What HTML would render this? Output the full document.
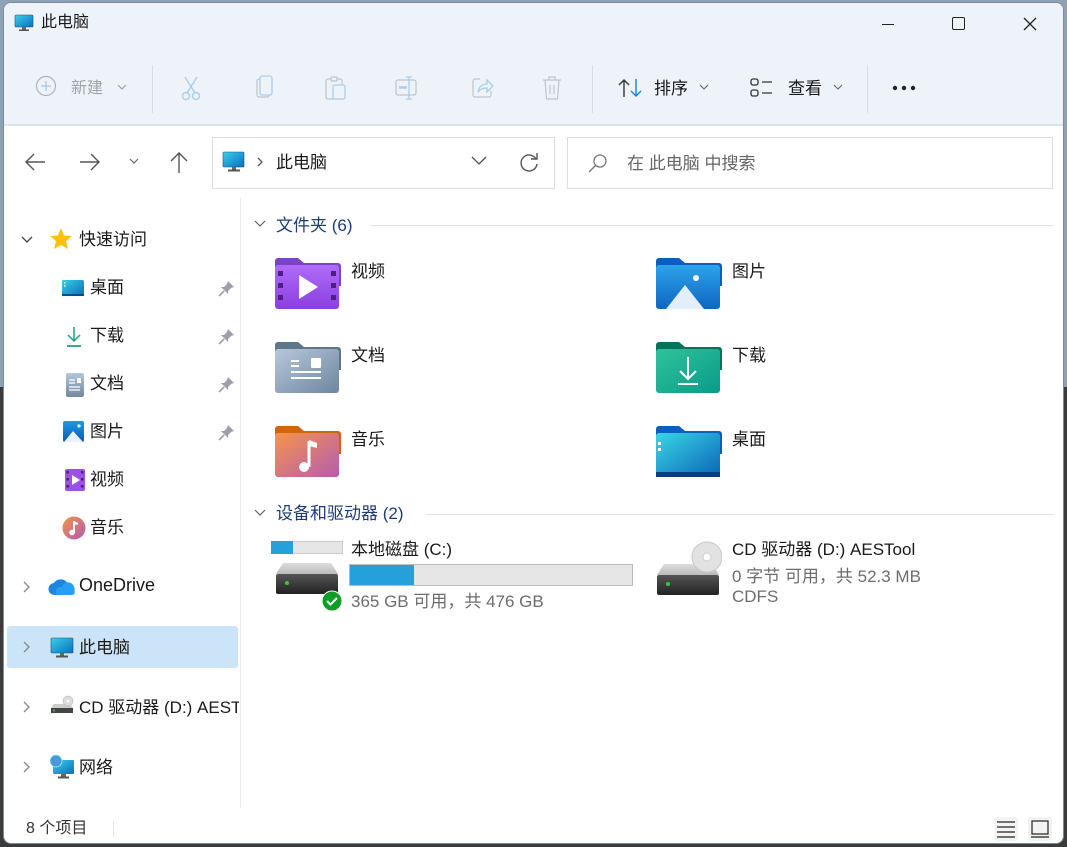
<!DOCTYPE html>
<html><head><meta charset="utf-8"><style>
*{margin:0;padding:0;box-sizing:border-box}
body{width:1067px;height:847px;overflow:hidden;position:relative;background:#3b3b3b;font-family:"Liberation Sans","Noto Sans CJK SC",sans-serif;color:#1a1a1a}
.topbg{position:absolute;left:0;top:0;width:1067px;height:387px;background:#8ea2b6}
.win{position:absolute;left:3px;top:2px;width:1061px;height:842px;background:#fff;border-radius:8px;overflow:hidden;border:1px solid #7d8b99}
.abs{position:absolute}
.title{left:0;top:0;width:100%;height:122px;background:#eef3fa}
.t{position:absolute;white-space:nowrap;margin-top:-4px}
.sep{position:absolute;width:1px;background:#d8dde3}
.g{color:#a0a4a8}
</style></head><body>
<div class="topbg"></div>
<div class="win">
 <div class="abs title"></div>
 <svg class="abs" style="left:10px;top:10px" width="20" height="20" viewBox="0 0 20 20"><defs><linearGradient id="m" x1="0" y1="0" x2="1" y2="1"><stop offset="0" stop-color="#3ad0e8"/><stop offset="1" stop-color="#0a6fc0"/></linearGradient></defs><rect x="1" y="2" width="18" height="12" rx="1" fill="url(#m)" stroke="#1b4f78" stroke-width="0.6"/><rect x="8" y="14" width="4" height="3" fill="#666"/><rect x="5" y="16.5" width="10" height="1.5" fill="#555"/></svg>
 <div class="t" style="left:37px;top:9px;font-size:16px">此电脑</div>
 <div class="abs" style="left:878px;top:21px;width:12px;height:1px;background:#222"></div>
 <div class="abs" style="left:948px;top:14px;width:13px;height:13px;border:1.3px solid #222;border-radius:2px"></div>
 <svg class="abs" style="left:1018px;top:13px" width="16" height="16"><path d="M2 2L14 14M14 2L2 14" stroke="#222" stroke-width="1.3"/></svg>
 <!-- toolbar -->
 <svg class="abs" style="left:31px;top:72px" width="22" height="22"><circle cx="11" cy="11" r="9.5" fill="none" stroke="#b0b4b8" stroke-width="1.2"/><path d="M11 6V16M6 11H16" stroke="#a9c7e6" stroke-width="1.3"/></svg>
 <div class="t g" style="left:67px;top:75px;font-size:16px">新建</div>
 <svg class="abs" style="left:113px;top:81px" width="10" height="7"><path d="M1 1L5 5L9 1" stroke="#999" stroke-width="1.1" fill="none"/></svg>
 <div class="sep" style="left:148px;top:62px;height:48px"></div>
 <svg class="abs" style="left:176px;top:72px" width="24" height="26"><path d="M5 2L15 18M17 2L7 18" stroke="#a8cdee" stroke-width="1.4" fill="none"/><circle cx="6" cy="21" r="3.5" fill="none" stroke="#a8cdee" stroke-width="1.4"/><circle cx="16" cy="21" r="3.5" fill="none" stroke="#a8cdee" stroke-width="1.4"/></svg>
 <svg class="abs" style="left:250px;top:72px" width="22" height="26"><rect x="3" y="4" width="12" height="18" rx="2" fill="none" stroke="#c0c4c8" stroke-width="1.2"/><rect x="6" y="1" width="12" height="19" rx="2" fill="#eef3fa" stroke="#a8cdee" stroke-width="1.3"/></svg>
 <svg class="abs" style="left:320px;top:72px" width="26" height="26"><rect x="2" y="4" width="16" height="20" rx="2" fill="none" stroke="#c0c4c8" stroke-width="1.2"/><rect x="7" y="2" width="6" height="4" rx="1" fill="#eef3fa" stroke="#c0c4c8" stroke-width="1.2"/><rect x="9" y="10" width="12" height="14" rx="2" fill="#eef3fa" stroke="#a8cdee" stroke-width="1.3"/></svg>
 <svg class="abs" style="left:390px;top:72px" width="26" height="26"><rect x="2" y="5" width="20" height="15" rx="2" fill="none" stroke="#c0c4c8" stroke-width="1.2"/><path d="M5 12.5H13" stroke="#a8cdee" stroke-width="2.5"/><path d="M15 2V24M12 2H18M12 24H18" stroke="#a8cdee" stroke-width="1.3" fill="none"/></svg>
 <svg class="abs" style="left:466px;top:72px" width="26" height="26"><path d="M10 4H5a2 2 0 0 0-2 2v14a2 2 0 0 0 2 2h14a2 2 0 0 0 2-2v-4" stroke="#c0c4c8" stroke-width="1.2" fill="none"/><path d="M8 17C9 11 13 9 17 9V5L23 11L17 17V13C13 13 10 14 8 17Z" stroke="#a8cdee" stroke-width="1.3" fill="none"/></svg>
 <svg class="abs" style="left:536px;top:72px" width="24" height="26"><path d="M3 5H21M9 5V2H15V5M5 5L6.5 24H17.5L19 5M10 10V19M14 10V19" stroke="#c0c4c8" stroke-width="1.2" fill="none"/></svg>
 <div class="sep" style="left:588px;top:62px;height:48px"></div>
 <svg class="abs" style="left:614px;top:74px" width="26" height="22"><path d="M6 20V3M1 8L6 3L11 8" stroke="#333" stroke-width="1.4" fill="none"/><path d="M18 2V19M13 14L18 19L23 14" stroke="#1a7fd8" stroke-width="1.4" fill="none"/></svg>
 <div class="t" style="left:650px;top:75px;font-size:17px">排序</div>
 <svg class="abs" style="left:695px;top:81px" width="10" height="7"><path d="M1 1L5 5L9 1" stroke="#666" stroke-width="1.1" fill="none"/></svg>
 <svg class="abs" style="left:746px;top:75px" width="26" height="20"><rect x="1" y="1" width="7" height="6" rx="2" fill="none" stroke="#333" stroke-width="1.3"/><rect x="1" y="12" width="7" height="6" rx="2" fill="none" stroke="#333" stroke-width="1.3"/><path d="M12 4H22M12 15H22" stroke="#333" stroke-width="1.3"/></svg>
 <div class="t" style="left:784px;top:75px;font-size:17px">查看</div>
 <svg class="abs" style="left:829px;top:81px" width="10" height="7"><path d="M1 1L5 5L9 1" stroke="#666" stroke-width="1.1" fill="none"/></svg>
 <div class="sep" style="left:863px;top:62px;height:48px"></div>
 <svg class="abs" style="left:887px;top:81px" width="30" height="8"><circle cx="4" cy="4" r="2.2" fill="#222"/><circle cx="13" cy="4" r="2.2" fill="#222"/><circle cx="22" cy="4" r="2.2" fill="#222"/></svg>
 <div class="abs" style="left:0;top:121px;width:100%;height:2px;background:#dfe3e8"></div>
 <!-- nav -->
 <svg class="abs" style="left:20px;top:148px" width="24" height="22"><path d="M2 11H21M10 3L2 11L10 19" stroke="#555" stroke-width="1.4" fill="none"/></svg>
 <svg class="abs" style="left:74px;top:148px" width="24" height="22"><path d="M2 11H21M13 3L21 11L13 19" stroke="#555" stroke-width="1.4" fill="none"/></svg>
 <svg class="abs" style="left:124px;top:154px" width="12" height="8"><path d="M2 2L6 6L10 2" stroke="#666" stroke-width="1.2" fill="none"/></svg>
 <svg class="abs" style="left:164px;top:147px" width="22" height="24"><path d="M11 23V3M3 11L11 3L19 11" stroke="#555" stroke-width="1.4" fill="none"/></svg>
 <div class="abs" style="left:208px;top:134px;width:343px;height:52px;border:1px solid #dcdcdc;background:#fff"></div>
 <svg class="abs" style="left:218px;top:148px" width="24" height="22"><rect x="1" y="1" width="21" height="15" rx="1" fill="url(#m)" stroke="#1b4f78" stroke-width="0.6"/><rect x="10" y="16" width="4" height="3" fill="#666"/><rect x="6" y="18.5" width="12" height="2" fill="#555"/></svg>
 <svg class="abs" style="left:253px;top:154px" width="7" height="10"><path d="M1 1L5 5L1 9" stroke="#555" stroke-width="1.3" fill="none"/></svg>
 <div class="t" style="left:272px;top:149px;font-size:17px">此电脑</div>
 <svg class="abs" style="left:466px;top:152px" width="18" height="12"><path d="M2 2L9 9L16 2" stroke="#555" stroke-width="1.3" fill="none"/></svg>
 <svg class="abs" style="left:514px;top:148px" width="22" height="22"><path d="M18 8A8 8 0 1 0 19 13" stroke="#555" stroke-width="1.4" fill="none"/><path d="M19 2V8H13" stroke="#555" stroke-width="1.4" fill="none"/></svg>
 <div class="abs" style="left:563px;top:134px;width:486px;height:52px;border:1px solid #dcdcdc;background:#fff"></div>
 <svg class="abs" style="left:583px;top:150px" width="22" height="22"><circle cx="13" cy="8" r="6" fill="none" stroke="#777" stroke-width="1.3"/><path d="M9 12L2 19" stroke="#777" stroke-width="1.4"/></svg>
 <div class="t" style="left:623px;top:150px;font-size:17px;color:#666">在 此电脑 中搜索</div>
 <!-- sidebar -->
 <div class="abs" style="left:236px;top:195px;width:1px;height:610px;background:#eaeaea"></div>
 <svg class="abs" style="left:16px;top:232px" width="14" height="10"><path d="M2 2L7 7L12 2" stroke="#444" stroke-width="1.3" fill="none"/></svg>
 <svg class="abs" style="left:45px;top:224px" width="24" height="24"><path d="M12 1L15 8.5L23 9L17 14L19 22L12 18L5 22L7 14L1 9L9 8.5Z" fill="#ffc107"/></svg>
 <div class="t" style="left:75px;top:226px;font-size:17px">快速访问</div>

 <svg class="abs" style="left:57px;top:275px" width="24" height="20"><defs><linearGradient id="d" x1="0" y1="0" x2="1" y2="1"><stop offset="0" stop-color="#36d1e6"/><stop offset="1" stop-color="#0a6bb8"/></linearGradient></defs><rect x="1" y="2" width="22" height="16" rx="1.5" fill="url(#d)"/><rect x="3" y="4" width="1.5" height="1.5" fill="#fff"/><rect x="3" y="7" width="1.5" height="1.5" fill="#fff"/><rect x="1" y="16" width="22" height="2" fill="#0b4a82"/></svg>
 <div class="t" style="left:86px;top:274px;font-size:17px">桌面</div>
 <svg class="abs" style="left:61px;top:322px" width="18" height="24"><path d="M9 2V16M3 10L9 16L15 10" stroke="#1aa383" stroke-width="1.5" fill="none"/><path d="M2 21H16" stroke="#1aa383" stroke-width="1.8"/></svg>
 <div class="t" style="left:86px;top:322px;font-size:17px">下载</div>
 <svg class="abs" style="left:61px;top:369px" width="20" height="26"><defs><linearGradient id="doc" x1="0" y1="0" x2="0" y2="1"><stop offset="0" stop-color="#b3c6da"/><stop offset="1" stop-color="#7188a0"/></linearGradient></defs><rect x="1" y="1" width="18" height="24" rx="2" fill="url(#doc)"/><path d="M4 8H10M4 11H10M4 15H15M4 18H15" stroke="#fff" stroke-width="1.3"/><rect x="12" y="6" width="4" height="5" fill="#fff"/></svg>
 <div class="t" style="left:86px;top:370px;font-size:17px">文档</div>
 <svg class="abs" style="left:58px;top:417px" width="24" height="24"><defs><linearGradient id="p" x1="0" y1="0" x2="0" y2="1"><stop offset="0" stop-color="#1b9ae8"/><stop offset="1" stop-color="#0a5bb0"/></linearGradient></defs><rect x="1" y="1" width="21" height="21" rx="2" fill="url(#p)"/><path d="M2 22L11 11L21 22Z" fill="#e8f2fc"/><circle cx="17" cy="6" r="1.6" fill="#fff"/></svg>
 <div class="t" style="left:86px;top:418px;font-size:17px">图片</div>
 <svg class="abs" style="left:60px;top:465px" width="22" height="24"><rect x="1" y="1" width="20" height="22" rx="2" fill="#9b50e8"/><path d="M8 7L16 12L8 17Z" fill="#fff"/><g fill="#4a2370"><rect x="2.5" y="3" width="2.5" height="2.5"/><rect x="2.5" y="10" width="2.5" height="2.5"/><rect x="2.5" y="17" width="2.5" height="2.5"/><rect x="17" y="3" width="2.5" height="2.5"/><rect x="17" y="10" width="2.5" height="2.5"/><rect x="17" y="17" width="2.5" height="2.5"/></g></svg>
 <div class="t" style="left:86px;top:466px;font-size:17px">视频</div>
 <svg class="abs" style="left:58px;top:513px" width="24" height="24"><defs><linearGradient id="mu" x1="0" y1="0" x2="1" y2="1"><stop offset="0" stop-color="#f39448"/><stop offset="1" stop-color="#b05ab0"/></linearGradient></defs><circle cx="12" cy="12" r="11.5" fill="url(#mu)"/><path d="M12 5V16" stroke="#fff" stroke-width="2"/><circle cx="10" cy="16.5" r="2.8" fill="#fff"/><path d="M12 5L16 7V9L12 8" fill="#fff"/></svg>
 <div class="t" style="left:86px;top:514px;font-size:17px">音乐</div>
 <svg class="abs" style="left:214px;top:276px" width="18" height="18"><path d="M10 2L16 8L13 9L10 12L10 15L3 8L6 8L9 5Z" fill="#9aa1a8"/><path d="M6 12L1 17" stroke="#9aa1a8" stroke-width="1.6"/></svg>
 <svg class="abs" style="left:214px;top:324px" width="18" height="18"><path d="M10 2L16 8L13 9L10 12L10 15L3 8L6 8L9 5Z" fill="#9aa1a8"/><path d="M6 12L1 17" stroke="#9aa1a8" stroke-width="1.6"/></svg>
 <svg class="abs" style="left:214px;top:372px" width="18" height="18"><path d="M10 2L16 8L13 9L10 12L10 15L3 8L6 8L9 5Z" fill="#9aa1a8"/><path d="M6 12L1 17" stroke="#9aa1a8" stroke-width="1.6"/></svg>
 <svg class="abs" style="left:214px;top:420px" width="18" height="18"><path d="M10 2L16 8L13 9L10 12L10 15L3 8L6 8L9 5Z" fill="#9aa1a8"/><path d="M6 12L1 17" stroke="#9aa1a8" stroke-width="1.6"/></svg>

 <svg class="abs" style="left:18px;top:577px" width="10" height="14"><path d="M2 2L7 7L2 12" stroke="#888" stroke-width="1.3" fill="none"/></svg>
 <svg class="abs" style="left:44px;top:575px" width="28" height="18"><path d="M7 17A6 6 0 0 1 6 5A8 8 0 0 1 20 6A5.5 5.5 0 0 1 22 17Z" fill="#1d86e0"/><path d="M9 17A5 5 0 0 1 14 9A6 6 0 0 1 26 12A3 3 0 0 1 24 17Z" fill="#2a9df4"/></svg>
 <div class="t" style="left:75px;top:576px;font-size:18px">OneDrive</div>

 <div class="abs" style="left:3px;top:623px;width:231px;height:42px;background:#cce4f7;border-radius:3px"></div>
 <svg class="abs" style="left:18px;top:637px" width="10" height="14"><path d="M2 2L7 7L2 12" stroke="#888" stroke-width="1.3" fill="none"/></svg>
 <svg class="abs" style="left:46px;top:634px" width="24" height="22"><rect x="1" y="1" width="22" height="15" rx="1" fill="url(#m)" stroke="#1b4f78" stroke-width="0.6"/><rect x="10" y="16" width="4" height="3" fill="#666"/><rect x="6" y="18.5" width="12" height="2" fill="#555"/></svg>
 <div class="t" style="left:75px;top:634px;font-size:17px">此电脑</div>

 <svg class="abs" style="left:18px;top:697px" width="10" height="14"><path d="M2 2L7 7L2 12" stroke="#888" stroke-width="1.3" fill="none"/></svg>
 <svg class="abs" style="left:46px;top:692px" width="24" height="20"><path d="M4 9H20L23 13H1Z" fill="#ccc"/><rect x="1" y="13" width="22" height="5" fill="#444"/><circle cx="4" cy="15.5" r="1" fill="#4c4"/><circle cx="18" cy="6" r="5" fill="#ddd" stroke="#aaa" stroke-width="0.5"/><circle cx="18" cy="6" r="1.2" fill="#fff"/></svg>
 <div class="t" style="left:75px;top:694px;font-size:17px;width:160px;overflow:hidden">CD 驱动器 (D:) AESTool</div>

 <svg class="abs" style="left:18px;top:757px" width="10" height="14"><path d="M2 2L7 7L2 12" stroke="#888" stroke-width="1.3" fill="none"/></svg>
 <svg class="abs" style="left:45px;top:751px" width="26" height="26"><rect x="4" y="6" width="21" height="14" rx="1" fill="url(#m)"/><rect x="12" y="20" width="5" height="3" fill="#666"/><rect x="9" y="22.5" width="11" height="2" fill="#555"/><circle cx="7" cy="7" r="6" fill="#4a9ad8"/><circle cx="7" cy="7" r="6" fill="none" stroke="#aee" stroke-width="0.8"/></svg>
 <div class="t" style="left:75px;top:754px;font-size:17px">网络</div>

 <!-- status -->
 <div class="t" style="left:22px;top:815px;font-size:16px;color:#333">8 个项目</div>
 <div class="abs" style="left:109px;top:818px;width:1px;height:16px;background:#e5e5e5"></div>
 <div class="abs" style="left:990px;top:814px;width:24px;height:24px;background:#f3f3f3;border-radius:3px"></div>
 <svg class="abs" style="left:993px;top:817px" width="18" height="18"><path d="M0 2H18M0 7H18M0 12H18M0 17H18" stroke="#222" stroke-width="1.2"/></svg>
 <div class="abs" style="left:1024px;top:814px;width:24px;height:24px;background:#f3f3f3;border-radius:3px"></div>
 <svg class="abs" style="left:1027px;top:817px" width="18" height="18"><rect x="1" y="1" width="16" height="13" fill="none" stroke="#222" stroke-width="1.2"/><path d="M0 17H18" stroke="#222" stroke-width="1.2"/></svg>

 <!-- content -->
 <svg class="abs" style="left:249px;top:216px" width="14" height="10"><path d="M2 2L7 7L12 2" stroke="#555" stroke-width="1.1" fill="none"/></svg>
 <div class="t" style="left:272px;top:212px;font-size:17px;color:#1e3a78">文件夹 (6)</div>
 <div class="abs" style="left:366px;top:222px;width:684px;height:1px;background:#e3e3e3"></div>
 <svg class="abs" style="left:249px;top:505px" width="14" height="10"><path d="M2 2L7 7L12 2" stroke="#555" stroke-width="1.1" fill="none"/></svg>
 <div class="t" style="left:272px;top:500px;font-size:17px;color:#1e3a78">设备和驱动器 (2)</div>
 <div class="abs" style="left:422px;top:511px;width:628px;height:1px;background:#e3e3e3"></div>

 <svg width="0" height="0" style="position:absolute"><defs>
  <linearGradient id="fv" x1="0" y1="0" x2="0" y2="1"><stop offset="0" stop-color="#b06cf8"/><stop offset="1" stop-color="#8a3ee0"/></linearGradient>
  <linearGradient id="fp" x1="0" y1="0" x2="0" y2="1"><stop offset="0" stop-color="#2da3ec"/><stop offset="1" stop-color="#0f66c0"/></linearGradient>
  <linearGradient id="fd" x1="0" y1="0" x2="1" y2="1"><stop offset="0" stop-color="#b6c8db"/><stop offset="1" stop-color="#6e86a0"/></linearGradient>
  <linearGradient id="fg" x1="0" y1="0" x2="1" y2="1"><stop offset="0" stop-color="#2ec49a"/><stop offset="1" stop-color="#0a9a8a"/></linearGradient>
  <linearGradient id="fm" x1="0" y1="0" x2="1" y2="1"><stop offset="0" stop-color="#f7944a"/><stop offset="1" stop-color="#b45cb0"/></linearGradient>
  <linearGradient id="fdk" x1="0" y1="0" x2="1" y2="1"><stop offset="0" stop-color="#3ad6e6"/><stop offset="1" stop-color="#0a64b8"/></linearGradient>
 </defs></svg>
 <svg class="abs" style="left:271px;top:254px" width="66" height="52"><path d="M0 4a3 3 0 0 1 3-3h20l6 5h34a3 3 0 0 1 3 3v20H0Z" fill="#7a45c2"/><rect x="0" y="8" width="64" height="44" rx="3" fill="url(#fv)"/><g fill="#4d1f85"><rect x="3" y="14" width="5" height="5"/><rect x="3" y="26" width="5" height="5"/><rect x="3" y="38" width="5" height="5"/><rect x="56" y="14" width="5" height="5"/><rect x="56" y="26" width="5" height="5"/><rect x="56" y="38" width="5" height="5"/></g><path d="M24 18L43 30L24 42Z" fill="#fff"/></svg>
 <div class="t" style="left:347px;top:258px;font-size:17px">视频</div>
 <svg class="abs" style="left:652px;top:254px" width="66" height="52"><path d="M0 4a3 3 0 0 1 3-3h20l6 5h34a3 3 0 0 1 3 3v20H0Z" fill="#0a5fc0"/><rect x="0" y="8" width="64" height="44" rx="3" fill="url(#fp)"/><path d="M10 52L29 28L48 52Z" fill="#e3eefb"/><circle cx="40" cy="21" r="3" fill="#fff"/></svg>
 <div class="t" style="left:728px;top:258px;font-size:17px">图片</div>
 <svg class="abs" style="left:271px;top:338px" width="66" height="52"><path d="M0 4a3 3 0 0 1 3-3h20l6 5h34a3 3 0 0 1 3 3v20H0Z" fill="#5f7688"/><rect x="0" y="8" width="64" height="44" rx="3" fill="url(#fd)"/><path d="M16 20H24M16 25H24M16 31H46M16 37H46" stroke="#fff" stroke-width="2"/><rect x="36" y="17" width="10" height="10" rx="1" fill="#fff"/></svg>
 <div class="t" style="left:347px;top:342px;font-size:17px">文档</div>
 <svg class="abs" style="left:652px;top:338px" width="66" height="52"><path d="M0 4a3 3 0 0 1 3-3h20l6 5h34a3 3 0 0 1 3 3v20H0Z" fill="#06735a"/><rect x="0" y="8" width="64" height="44" rx="3" fill="url(#fg)"/><path d="M32 16V38M24 30L32 38L40 30M22 43H42" stroke="#fff" stroke-width="2" fill="none"/></svg>
 <div class="t" style="left:728px;top:342px;font-size:17px">下载</div>
 <svg class="abs" style="left:271px;top:422px" width="66" height="52"><path d="M0 4a3 3 0 0 1 3-3h20l6 5h34a3 3 0 0 1 3 3v20H0Z" fill="#d0670a"/><rect x="0" y="8" width="64" height="44" rx="3" fill="url(#fm)"/><path d="M34 16V42" stroke="#fff" stroke-width="3"/><circle cx="29" cy="42" r="5" fill="#fff"/><path d="M34 15L42 18V23L34 21Z" fill="#fff"/></svg>
 <div class="t" style="left:347px;top:426px;font-size:17px">音乐</div>
 <svg class="abs" style="left:652px;top:422px" width="66" height="52"><path d="M0 4a3 3 0 0 1 3-3h20l6 5h34a3 3 0 0 1 3 3v20H0Z" fill="#0a5fc0"/><rect x="0" y="8" width="64" height="44" rx="3" fill="url(#fdk)"/><rect x="2" y="17" width="3" height="3" fill="#fff"/><rect x="2" y="23" width="3" height="3" fill="#fff"/><rect x="0" y="47" width="64" height="5" fill="#0b3f78"/></svg>
 <div class="t" style="left:728px;top:426px;font-size:17px">桌面</div>

 <div class="abs" style="left:267px;top:538px;width:72px;height:13px;background:#e6e6e6;border:1px solid #ccc"></div>
 <div class="abs" style="left:267px;top:538px;width:22px;height:13px;background:#26a0da"></div>
 <svg class="abs" style="left:271px;top:559px" width="64" height="34"><defs><linearGradient id="hd" x1="0" y1="0" x2="0" y2="1"><stop offset="0" stop-color="#ddd"/><stop offset="1" stop-color="#bbb"/></linearGradient><linearGradient id="hb" x1="0" y1="0" x2="0" y2="1"><stop offset="0" stop-color="#555"/><stop offset="1" stop-color="#222"/></linearGradient></defs><path d="M8 1H56L63 12H1Z" fill="url(#hd)"/><rect x="1" y="12" width="62" height="20" rx="2" fill="url(#hb)"/><circle cx="12" cy="21" r="2" fill="#3c3"/></svg>
 <svg class="abs" style="left:317px;top:587px" width="22" height="22"><circle cx="11" cy="11" r="10" fill="#0f9d28" stroke="#fff" stroke-width="1"/><path d="M6 11L9.5 14.5L16 8" stroke="#fff" stroke-width="2" fill="none"/></svg>
 <div class="t" style="left:347px;top:536px;font-size:17px">本地磁盘 (C:)</div>
 <div class="abs" style="left:345px;top:561px;width:284px;height:22px;background:#e6e6e6;border:1px solid #bcbcbc"></div>
 <div class="abs" style="left:346px;top:562px;width:64px;height:20px;background:#26a0da"></div>
 <div class="t" style="left:347px;top:588px;font-size:17px;color:#6d6d6d">365 GB 可用，共 476 GB</div>

 <svg class="abs" style="left:652px;top:537px" width="66" height="56"><path d="M8 24H56L63 35H1Z" fill="url(#hd)"/><rect x="1" y="35" width="62" height="20" rx="2" fill="url(#hb)"/><circle cx="12" cy="44" r="2" fill="#3c3"/><circle cx="51" cy="17" r="15" fill="#e2e2e2" stroke="#c8c8c8"/><circle cx="51" cy="17" r="4" fill="#fff" stroke="#ccc"/></svg>
 <div class="t" style="left:728px;top:536px;font-size:17px">CD 驱动器 (D:) AESTool</div>
 <div class="t" style="left:728px;top:563px;font-size:17px;color:#6d6d6d">0 字节 可用，共 52.3 MB</div>
 <div class="t" style="left:728px;top:588px;font-size:17px;color:#6d6d6d">CDFS</div>
</div>
</body></html>
